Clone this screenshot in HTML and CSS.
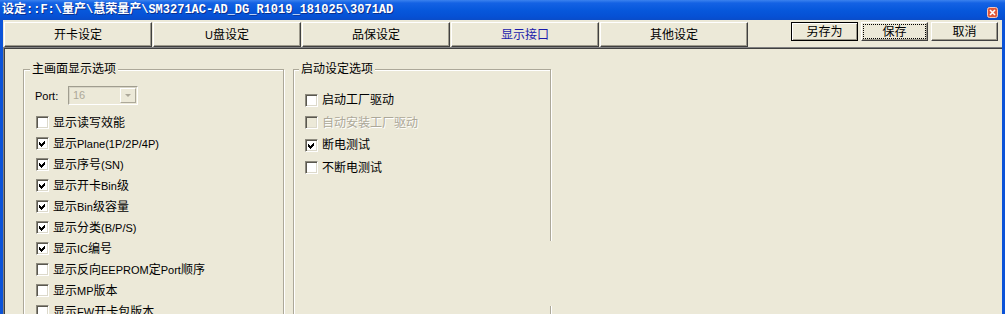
FILE: index.html
```html
<!DOCTYPE html>
<html lang="zh-CN">
<head>
<meta charset="utf-8">
<title>设定</title>
<link rel="stylesheet" href="styles.css">
</head>
<body>
<div class="titlebar">
  <span class="title">设定::F:\量产\慧荣量产\SM3271AC-AD_DG_R1019_181025\3071AD</span>
  <span class="close">
    <svg width="11" height="11" viewBox="0 0 11 11">
      <rect x="0.5" y="0.5" width="10" height="10" rx="2" fill="#e1583a" stroke="#f4c8bc"/>
      <path d="M3 3 L8 8 M8 3 L3 8" stroke="#fff" stroke-width="1.6"/>
    </svg>
  </span>
</div>
<div class="frame">
  <div class="toolbar">
    <div class="tabs">
      <div class="btn tab">开卡设定</div>
      <div class="btn tab"><span class="en">U</span>盘设定</div>
      <div class="btn tab">品保设定</div>
      <div class="btn tab active">显示接口</div>
      <div class="btn tab">其他设定</div>
    </div>
    <div class="actions">
      <div class="btn act default">另存为</div>
      <div class="btn act focus"><span class="focusrect">保存</span></div>
      <div class="btn act">取消</div>
    </div>
  </div>
  <div class="page">
    <fieldset class="group g1">
      <legend>主画面显示选项</legend>
      <div class="portrow">
        <span class="portlabel en">Port:</span>
        <div class="combo">
          <span class="val en">16</span>
          <span class="arrow"><span class="tri"></span></span>
        </div>
      </div>
      <div class="row"><span class="box"></span>显示读写效能</div>
      <div class="row"><span class="box"><svg class="tick" width="7" height="7" viewBox="0 0 7 7"><path d="M0 2 L2 4 L6 0 L6 3 L2 7 L0 5 Z"/></svg></span>显示<span class="en">Plane(1P/2P/4P)</span></div>
      <div class="row"><span class="box"><svg class="tick" width="7" height="7" viewBox="0 0 7 7"><path d="M0 2 L2 4 L6 0 L6 3 L2 7 L0 5 Z"/></svg></span>显示序号<span class="en">(SN)</span></div>
      <div class="row"><span class="box"><svg class="tick" width="7" height="7" viewBox="0 0 7 7"><path d="M0 2 L2 4 L6 0 L6 3 L2 7 L0 5 Z"/></svg></span>显示开卡<span class="en">Bin</span>级</div>
      <div class="row"><span class="box"><svg class="tick" width="7" height="7" viewBox="0 0 7 7"><path d="M0 2 L2 4 L6 0 L6 3 L2 7 L0 5 Z"/></svg></span>显示<span class="en">Bin</span>级容量</div>
      <div class="row"><span class="box"><svg class="tick" width="7" height="7" viewBox="0 0 7 7"><path d="M0 2 L2 4 L6 0 L6 3 L2 7 L0 5 Z"/></svg></span>显示分类<span class="en">(B/P/S)</span></div>
      <div class="row"><span class="box"><svg class="tick" width="7" height="7" viewBox="0 0 7 7"><path d="M0 2 L2 4 L6 0 L6 3 L2 7 L0 5 Z"/></svg></span>显示<span class="en">IC</span>编号</div>
      <div class="row"><span class="box"></span>显示反向<span class="en">EEPROM</span>定<span class="en">Port</span>顺序</div>
      <div class="row"><span class="box"></span>显示<span class="en">MP</span>版本</div>
      <div class="row"><span class="box"></span>显示<span class="en">FW</span>开卡包版本</div>
    </fieldset>
    <fieldset class="group g2">
      <legend>启动设定选项</legend>
      <div class="rows2">
        <div class="row r2"><span class="box"></span>启动工厂驱动</div>
        <div class="row r2 disabled"><span class="box"></span>自动安装工厂驱动</div>
        <div class="row r2"><span class="box"><svg class="tick" width="7" height="7" viewBox="0 0 7 7"><path d="M0 2 L2 4 L6 0 L6 3 L2 7 L0 5 Z"/></svg></span>断电测试</div>
        <div class="row r2"><span class="box"></span>不断电测试</div>
      </div>
    </fieldset>
    <div class="hidden-ctl"></div>
  </div>
</div>
</body>
</html>
```

FILE: styles.css
```css
html, body {
  margin: 0;
  padding: 0;
}
body {
  width: 1005px;
  height: 314px;
  overflow: hidden;
  background: #ece9d8;
  font-family: "Liberation Sans", "Noto Sans CJK SC", sans-serif;
  font-size: 12px;
  line-height: 14px;
  color: #000;
}
.en {
  font-family: "Liberation Sans", sans-serif;
  font-size: 11px;
}

/* Title bar */
.titlebar {
  height: 20px;
  box-sizing: border-box;
  display: flex;
  align-items: center;
  justify-content: space-between;
  padding: 0 7px 0 2px;
  background: linear-gradient(#3b82ee 0, #1462e4 3px, #0758dc 10px, #0650d4 17px, #0a4cc8 20px);
}
.title {
  font-family: "Liberation Mono", "Noto Sans CJK SC", monospace;
  font-weight: bold;
  font-size: 12px;
  line-height: 14px;
  color: #fff;
  white-space: nowrap;
  text-shadow: 1px 1px 0 #0a2f8f;
}
.close {
  display: flex;
  width: 11px;
  height: 11px;
  margin-top: 4px;
}

/* Window frame + client */
.frame {
  height: 294px;
  border-left: 3px solid #0b53d8;
  border-right: 3px solid #0b53d8;
  display: flex;
  flex-direction: column;
  background: #ece9d8;
}
.toolbar {
  display: flex;
  align-items: flex-start;
  padding: 2px 4px 0 1px;
}
.tabs {
  display: flex;
  gap: 1px;
}
.btn {
  box-sizing: border-box;
  display: flex;
  align-items: center;
  justify-content: center;
  background: #ece9d8;
  border: 1px solid;
  border-color: #fff #404040 #404040 #fff;
  box-shadow: inset -1px -1px 0 #9d9a8c;
  white-space: nowrap;
}
.tab {
  width: 148px;
  height: 25px;
}
.tab.active {
  color: #1b1bab;
}
.actions {
  margin-left: auto;
  display: flex;
  gap: 3px;
}
.act {
  width: 67px;
  height: 19px;
}
.act.default {
  border-color: #000;
  box-shadow: inset 1px 1px 0 #fff, inset -1px -1px 0 #9d9a8c;
}
.act.focus {
  padding: 1px;
}
.focusrect {
  align-self: stretch;
  flex: 1;
  display: flex;
  align-items: center;
  justify-content: center;
  border: 1px dotted #000;
}

/* Page */
.page {
  flex: 1;
  position: relative;
  overflow: hidden;
  display: flex;
  align-items: flex-start;
  border-top: 1px solid #808080;
  border-left: 1px solid #808080;
  box-shadow: inset 1px 1px 0 #404040;
  padding: 14px 0 0 19px;
}
.group {
  margin: 0;
  box-sizing: border-box;
  min-width: 0;
  height: 400px;
  border: 1px solid #aca899;
  box-shadow: inset 1px 1px 0 #fff, 1px 1px 0 #fff;
  padding: 0 0 0 12px;
}
.group legend {
  padding: 0 2px;
  margin-left: -6px;
  line-height: 14px;
  height: 14px;
  background: #ece9d8;
}
.g1 {
  width: 261px;
}
.g2 {
  width: 258px;
  margin-left: 9px;
  padding-left: 11px;
}

.portrow {
  display: flex;
  align-items: center;
  height: 19px;
  margin: 10px 0 7px -1px;
}
.portlabel {
  width: 33px;
}
.combo {
  width: 70px;
  height: 19px;
  box-sizing: border-box;
  display: flex;
  align-items: stretch;
  padding: 1px;
  border: 1px solid;
  border-color: #a09d8f #fff #fff #a09d8f;
  box-shadow: inset 1px 1px 0 #d8d5c6;
  background: #ece9d8;
}
.combo .val {
  flex: 1;
  color: #aca899;
  padding-left: 3px;
  line-height: 15px;
}
.combo .arrow {
  width: 16px;
  box-sizing: border-box;
  display: flex;
  align-items: center;
  justify-content: center;
  border: 1px solid;
  border-color: #fff #aca899 #aca899 #fff;
  background: #ece9d8;
}
.tri {
  width: 0;
  height: 0;
  border-left: 3px solid transparent;
  border-right: 3px solid transparent;
  border-top: 3px solid #aca899;
}

.row {
  display: flex;
  align-items: center;
  height: 21px;
  white-space: nowrap;
}
.rows2 {
  margin-top: 13px;
}
.row.r2 {
  height: 22.5px;
}
.box {
  flex: none;
  width: 13px;
  height: 13px;
  box-sizing: border-box;
  margin-right: 4px;
  display: flex;
  align-items: center;
  justify-content: center;
  background: #fff;
  border: 1px solid;
  border-color: #8d8a7e #fff #fff #8d8a7e;
  box-shadow: inset 1px 1px 0 #5a584f, inset -1px -1px 0 #dcd9cb;
}
.tick {
  display: block;
  fill: #000;
  shape-rendering: crispEdges;
}
.row.disabled {
  color: #aca899;
  text-shadow: 1px 1px 0 #fff;
}
.row.disabled .box {
  background: #ece9d8;
}

.hidden-ctl {
  position: absolute;
  left: 544px;
  top: 193px;
  width: 8px;
  height: 65px;
  background: #ece9d8;
}
```
